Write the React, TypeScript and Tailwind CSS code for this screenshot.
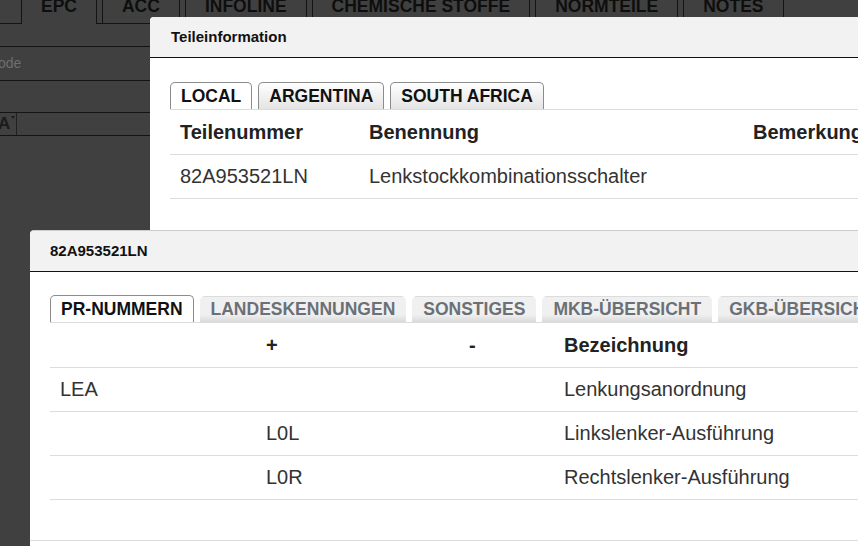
import React from 'react';

const topTabs = ['EPC', 'ACC', 'INFOLINE', 'CHEMISCHE STOFFE', 'NORMTEILE', 'NOTES'];

function TopTabs() {
    return (
        <div className="flex h-[24px]">
            <div className="w-[21px] border-b border-[#141414]" />
            {topTabs.map((t, i) => (
                <React.Fragment key={t}>
                    {i > 0 && <div className="w-[5px] border-b border-[#141414]" />}
                    <div
                        className={
                            'h-[24px] px-[19px] border-x border-[#141414] overflow-hidden text-[17.5px] font-bold text-[#0e0e0e] ' +
                            (i === 0 ? '' : 'border-b')
                        }
                    >
                        <div className="leading-[17px] -mt-[2px] whitespace-nowrap">{t}</div>
                    </div>
                </React.Fragment>
            ))}
            <div className="flex-1 border-b border-[#141414]" />
        </div>
    );
}

function Background() {
    return (
        <div className="w-full">
            <TopTabs />
            <div className="h-[23px] border-b border-[#141414]" />
            <div className="h-[34px] border-b border-[#141414] flex items-center">
                <span className="-ml-[2px] text-[14px] text-[#6e6e6e]">ode</span>
            </div>
            <div className="h-[32px] border-b border-[#141414]" />
            <div className="h-[23px] border-b border-[#141414] flex">
                <div className="w-[17px] border-r border-[#202020] flex items-start overflow-hidden">
                    <span className="-ml-[2px] text-[17px] leading-[22px] text-[#1c1c1c] font-bold">A</span>
                    <svg width="4" height="3" viewBox="0 0 4 3" className="mt-[3px] ml-[1px] shrink-0">
                        <path d="M0 0 L4 0 L2 3 Z" fill="#1c1c1c" />
                    </svg>
                </div>
            </div>
        </div>
    );
}

type TabProps = { label: string; active?: boolean; variant: 'plain' | 'muted' };

function DialogTab({ label, active, variant }: TabProps) {
    if (active) {
        return (
            <div className="h-[27px] px-[10px] border border-b-0 border-[#8c8c8c] rounded-t-[5px] bg-white text-[17.5px] leading-[26px] font-bold text-[#111] whitespace-nowrap">
                {label}
            </div>
        );
    }
    if (variant === 'plain') {
        return (
            <div className="h-[27px] px-[10px] border border-b-0 border-[#8c8c8c] rounded-t-[5px] bg-[linear-gradient(#ffffff,#e4e4e4)] text-[17.5px] leading-[26px] font-bold text-[#111] whitespace-nowrap">
                {label}
            </div>
        );
    }
    return (
        <div className="h-[26px] mt-[1px] px-[10px] border border-b-0 border-transparent rounded-t-[5px] bg-[linear-gradient(#f0f0f0_70%,#dadada)] text-[17.5px] leading-[25px] font-bold text-[#6b7077] whitespace-nowrap">
            {label}
        </div>
    );
}

export default function App() {
    return (
        <div className="relative w-[858px] h-[546px] overflow-hidden bg-[#404040] font-['Liberation_Sans',Arial,sans-serif]">
            <Background />

            {/* Teileinformation dialog */}
            <div className="absolute left-[150px] top-[17px] w-[760px] h-[260px] bg-white rounded-tl-[4px] overflow-hidden">
                <div className="h-[41px] bg-[#f2f2f2] border-b border-[#111] flex items-center px-[21px]">
                    <span className="text-[15px] font-bold text-[#111]">Teileinformation</span>
                </div>
                <div className="pt-[24px] pl-[20px]">
                    <div className="flex gap-[6px] border-b border-[#dcdcdc]">
                        <DialogTab label="LOCAL" active variant="plain" />
                        <DialogTab label="ARGENTINA" variant="plain" />
                        <DialogTab label="SOUTH AFRICA" variant="plain" />
                    </div>
                    <table className="w-full border-collapse text-[20px] text-left">
                        <thead>
                            <tr className="h-[44px] border-b border-[#dcdcdc]">
                                <th className="w-[189px] pl-[10px] font-bold text-[#222]">Teilenummer</th>
                                <th className="w-[384px] pl-[10px] font-bold text-[#222]">Benennung</th>
                                <th className="pl-[10px] font-bold text-[#222] whitespace-nowrap">Bemerkung</th>
                            </tr>
                        </thead>
                        <tbody>
                            <tr className="h-[44px] border-b border-[#dcdcdc]">
                                <td className="pl-[10px] text-[#333]">82A953521LN</td>
                                <td className="pl-[10px] text-[#333]">Lenkstockkombinationsschalter</td>
                                <td className="pl-[10px]" />
                            </tr>
                        </tbody>
                    </table>
                </div>
            </div>

            {/* PR-Nummern dialog */}
            <div className="absolute left-[30px] top-[230px] w-[880px] h-[340px] bg-white border-t border-[#cccccc] rounded-tl-[4px] overflow-hidden">
                <div className="h-[41px] bg-[#f2f2f2] border-b border-[#111] flex items-center px-[20px]">
                    <span className="text-[15px] font-bold text-[#111]">82A953521LN</span>
                </div>
                <div className="pt-[23px] pl-[20px]">
                    <div className="flex gap-[6px] border-b border-[#dcdcdc]">
                        <DialogTab label="PR-NUMMERN" active variant="muted" />
                        <DialogTab label="LANDESKENNUNGEN" variant="muted" />
                        <DialogTab label="SONSTIGES" variant="muted" />
                        <DialogTab label="MKB-ÜBERSICHT" variant="muted" />
                        <DialogTab label="GKB-ÜBERSICHT" variant="muted" />
                    </div>
                    <table className="w-full border-collapse text-[20px] text-left">
                        <thead>
                            <tr className="h-[44px] border-b border-[#dcdcdc]">
                                <th className="w-[206px] pl-[10px]" />
                                <th className="w-[203px] pl-[10px] font-bold text-[#222]">+</th>
                                <th className="w-[95px] pl-[10px] font-bold text-[#222]">-</th>
                                <th className="pl-[10px] font-bold text-[#222]">Bezeichnung</th>
                            </tr>
                        </thead>
                        <tbody className="text-[#333]">
                            <tr className="h-[44px] border-b border-[#dcdcdc]">
                                <td className="pl-[10px]">LEA</td>
                                <td className="pl-[10px]" />
                                <td className="pl-[10px]" />
                                <td className="pl-[10px]">Lenkungsanordnung</td>
                            </tr>
                            <tr className="h-[44px] border-b border-[#dcdcdc]">
                                <td className="pl-[10px]" />
                                <td className="pl-[10px]">L0L</td>
                                <td className="pl-[10px]" />
                                <td className="pl-[10px]">Linkslenker-Ausführung</td>
                            </tr>
                            <tr className="h-[44px] border-b border-[#dcdcdc]">
                                <td className="pl-[10px]" />
                                <td className="pl-[10px]">L0R</td>
                                <td className="pl-[10px]" />
                                <td className="pl-[10px]">Rechtslenker-Ausführung</td>
                            </tr>
                        </tbody>
                    </table>
                </div>
                <div className="h-[40px]" />
                <div className="border-t border-[#dcdcdc] h-[20px]" />
            </div>
        </div>
    );
}
